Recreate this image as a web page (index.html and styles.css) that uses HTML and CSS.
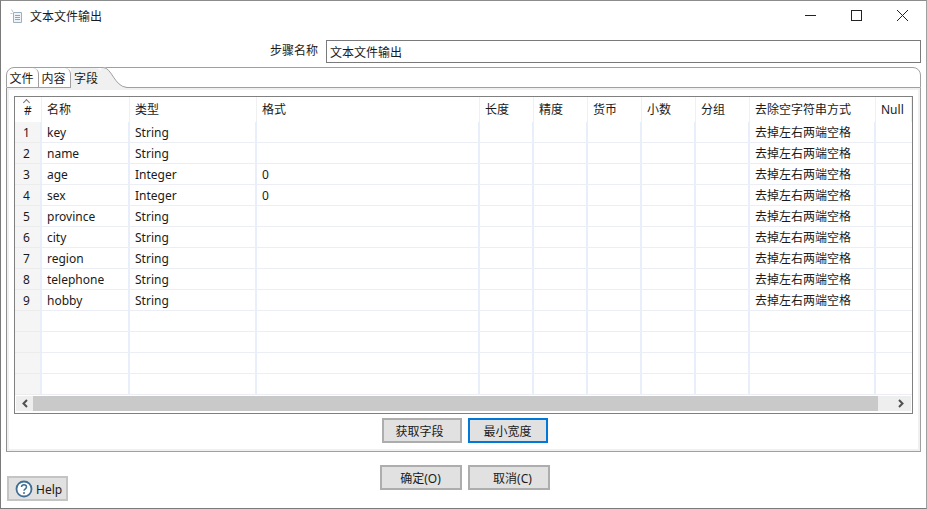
FILE: index.html
```html
<!DOCTYPE html>
<html>
<head>
  <title>文本文件输出</title>
  <link rel="stylesheet" href="styles.css">
</head>
<body>
  <div class="window">
    <div class="titlebar">
      <svg class="app-icon" width="14" height="15" viewBox="0 0 14 15">
        <path d="M3.500 3.500h8v10h-8z" fill="#eef3f7" stroke="#9db0bf"/>
        <path d="M5 6.500h5M5 8.500h5M5 10.500h5" stroke="#8fa5b5"/>
        <path d="M1.500 .5l1.500 2.500M.5 4.500h2" stroke="#b4c4d0"/>
      </svg>
      <span class="title">文本文件输出</span>
      <div class="controls">
        <svg width="46" height="32" viewBox="0 0 46 32"><path d="M18 15.500h11" stroke="#222"/></svg>
        <svg width="46" height="32" viewBox="0 0 46 32"><rect x="18.500" y="10.500" width="10" height="10" fill="none" stroke="#222"/></svg>
        <svg width="46" height="32" viewBox="0 0 46 32"><path d="M18 10l11 11M29 10l-11 11" stroke="#222" fill="none"/></svg>
      </div>
    </div>

    <div class="step-row">
      <label class="step-label">步骤名称</label>
      <input class="step-input" type="text" value="文本文件输出">
    </div>

    <div class="folder">
      <div class="tabs">
        <span class="tab">文件</span>
        <span class="tab">内容</span>
        <span class="tab tab-active">字段
          <svg class="tab-curve" width="30" height="22" viewBox="0 0 30 22">
            <path d="M0 0h2c9 0 11 19 24 20.500h4v1.500h-30z" fill="#f0f0f0"/>
            <path d="M0 .5h2c9 0 11 19 24 20h4" fill="none" stroke="#a0a0a0"/>
          </svg>
        </span>
      </div>
      <div class="panel">
        <div class="grid-frame">
          <table class="grid">
            <colgroup>
              <col class="c-num"><col class="c-name"><col class="c-type"><col class="c-format">
              <col class="c-small"><col class="c-small"><col class="c-small"><col class="c-small"><col class="c-small">
              <col class="c-trim"><col class="c-null">
            </colgroup>
            <thead>
              <tr>
                <th class="num"><span class="sort-caret"></span>#</th><th>名称</th><th>类型</th><th>格式</th><th>长度</th><th>精度</th><th>货币</th><th>小数</th><th>分组</th><th>去除空字符串方式</th><th>Null</th>
              </tr>
            </thead>
            <tbody>
              <tr><td class="num">1</td><td>key</td><td>String</td><td></td><td></td><td></td><td></td><td></td><td></td><td>去掉左右两端空格</td><td></td></tr>
              <tr><td class="num">2</td><td>name</td><td>String</td><td></td><td></td><td></td><td></td><td></td><td></td><td>去掉左右两端空格</td><td></td></tr>
              <tr><td class="num">3</td><td>age</td><td>Integer</td><td>0</td><td></td><td></td><td></td><td></td><td></td><td>去掉左右两端空格</td><td></td></tr>
              <tr><td class="num">4</td><td>sex</td><td>Integer</td><td>0</td><td></td><td></td><td></td><td></td><td></td><td>去掉左右两端空格</td><td></td></tr>
              <tr><td class="num">5</td><td>province</td><td>String</td><td></td><td></td><td></td><td></td><td></td><td></td><td>去掉左右两端空格</td><td></td></tr>
              <tr><td class="num">6</td><td>city</td><td>String</td><td></td><td></td><td></td><td></td><td></td><td></td><td>去掉左右两端空格</td><td></td></tr>
              <tr><td class="num">7</td><td>region</td><td>String</td><td></td><td></td><td></td><td></td><td></td><td></td><td>去掉左右两端空格</td><td></td></tr>
              <tr><td class="num">8</td><td>telephone</td><td>String</td><td></td><td></td><td></td><td></td><td></td><td></td><td>去掉左右两端空格</td><td></td></tr>
              <tr><td class="num">9</td><td>hobby</td><td>String</td><td></td><td></td><td></td><td></td><td></td><td></td><td>去掉左右两端空格</td><td></td></tr>
              <tr><td class="num"></td><td></td><td></td><td></td><td></td><td></td><td></td><td></td><td></td><td></td><td></td></tr>
              <tr><td class="num"></td><td></td><td></td><td></td><td></td><td></td><td></td><td></td><td></td><td></td><td></td></tr>
              <tr><td class="num"></td><td></td><td></td><td></td><td></td><td></td><td></td><td></td><td></td><td></td><td></td></tr>
              <tr><td class="num"></td><td></td><td></td><td></td><td></td><td></td><td></td><td></td><td></td><td></td><td></td></tr>
            </tbody>
          </table>
          <div class="scrollbar">
            <span class="arrow">
              <svg width="8" height="9" viewBox="0 0 8 9"><path d="M6 1L2.500 4.500 6 8" fill="none" stroke="#505050" stroke-width="2"/></svg>
            </span>
            <span class="thumb"></span>
            <span class="arrow arrow-right">
              <svg width="8" height="9" viewBox="0 0 8 9"><path d="M2 1l3.500 3.500L2 8" fill="none" stroke="#505050" stroke-width="2"/></svg>
            </span>
          </div>
        </div>
        <div class="panel-buttons">
          <button class="btn btn-fields">获取字段</button>
          <button class="btn btn-focus">最小宽度</button>
        </div>
      </div>
    </div>

    <div class="footer">
      <button class="btn btn-help">
        <svg width="18" height="18" viewBox="0 0 18 18">
          <circle cx="9" cy="9" r="7.500" fill="#fff" stroke="#3f6f96" stroke-width="1.800"/>
          <path d="M6.500 7c0-3 5-3 5 0 0 1.800-2.500 1.800-2.500 3.800" fill="none" stroke="#3f6f96" stroke-width="1.500"/>
          <circle cx="9" cy="13" r="1" fill="#3f6f96"/>
        </svg>
        <span class="help-text">Help</span>
      </button>
      <div class="footer-main">
        <button class="btn btn-wide">确定(O)</button>
        <button class="btn btn-wide btn-cancel">取消(C)</button>
      </div>
    </div>
  </div>
</body>
</html>
```

FILE: styles.css
```css
html, body {
  margin: 0;
  padding: 0;
  background: #fff;
}

body {
  font-family: "Noto Sans", "Noto Sans CJK SC", sans-serif;
  font-size: 12px;
  color: #1a1a1a;
}

.window {
  width: 927px;
  height: 509px;
  box-sizing: border-box;
  border: 1px solid #7a7a7a;
  border-top-color: #8c8c8c;
  border-right-color: #a0a0a0;
  background: #fff;
  display: flex;
  flex-direction: column;
  overflow: hidden;
}

.titlebar {
  height: 31px;
  display: flex;
  align-items: center;
  flex: none;
}

.app-icon {
  margin-left: 9px;
  margin-top: -1px;
}

.title {
  margin-left: 6px;
  margin-top: -2px;
}

.controls {
  margin-left: auto;
  display: flex;
  margin-top: -1px;
  margin-right: 1px;
}

.step-row {
  display: flex;
  align-items: center;
  height: 23px;
  margin-top: 8px;
  flex: none;
}

.step-label {
  width: 317px;
  text-align: right;
  margin-top: -3px;
}

.step-input {
  width: 595px;
  height: 23px;
  margin-left: 8px;
  box-sizing: border-box;
  border: 1px solid #7a7a7a;
  padding: 1px 3px;
  font: inherit;
  color: inherit;
  outline: none;
}

.folder {
  margin: 4px 0 0 5px;
  width: 915px;
  flex: none;
  position: relative;
}

.tabs {
  height: 21px;
  box-sizing: border-box;
  border: 1px solid #a0a0a0;
  border-radius: 8px 8px 0 0;
  display: flex;
}

.tab {
  width: 32px;
  height: 20px;
  box-sizing: border-box;
  padding-right: 2px;
  border-right: 1px solid #a0a0a0;
  border-top-right-radius: 6px;
  text-align: center;
  line-height: 22px;
}

.tab-active {
  position: relative;
  width: 31px;
  background: #f0f0f0;
  border-right: none;
  padding-right: 1px;
}

.tab-curve {
  position: absolute;
  left: 30px;
  top: -1px;
}

.panel {
  height: 364px;
  box-sizing: border-box;
  border: 1px solid #a0a0a0;
  border-top: none;
  border-left-color: #909090;
  background: #fff;
  box-shadow: inset 0 0 0 2px #f0f0f0;
  display: flex;
  flex-direction: column;
}

.grid-frame {
  background: #fff;
  margin: 8px 7px 0 7px;
  height: 318px;
  box-sizing: border-box;
  border: 1px solid #808080;
  display: flex;
  flex-direction: column;
  flex: none;
}

.grid {
  width: 897px;
  table-layout: fixed;
  border-collapse: separate;
  border-spacing: 0;
  flex: none;
}

.c-num { width: 27px; }
.c-name { width: 88px; }
.c-type { width: 127px; }
.c-format { width: 223px; }
.c-small { width: 54px; }
.c-trim { width: 126px; }
.c-null { width: 36px; }

.grid th {
  height: 25px;
  box-sizing: border-box;
  padding: 0 0 0 5px;
  font-weight: normal;
  text-align: left;
  line-height: 16px;
  border-right: 1px solid #f0f0f0;
  overflow: hidden;
  white-space: nowrap;
}

.grid th.num {
  position: relative;
  padding: 2px 0 0;
  text-align: center;
}

.sort-caret {
  position: absolute;
  left: 9px;
  top: 3px;
  width: 4px;
  height: 4px;
  border-left: 1px solid #777;
  border-top: 1px solid #777;
  transform: rotate(45deg);
}

.grid td {
  height: 21px;
  box-sizing: border-box;
  padding: 1px 0 0 5px;
  line-height: 18px;
  border-bottom: 1px solid #ebeff5;
  border-right: 2px solid #e9effa;
  white-space: nowrap;
  overflow: hidden;
}

.grid td.num {
  background: #f5f5f5;
  border-bottom-color: #ececec;
  padding-left: 8px;
}

.grid td:last-child {
  border-right: none;
}

.scrollbar {
  margin: 1px 1px 0 1px;
  height: 15px;
  display: flex;
  background: #eee;
  flex: none;
}

.arrow {
  width: 17px;
  display: flex;
  align-items: center;
  justify-content: center;
}

.thumb {
  width: 845px;
  background: #c9c9c9;
}

.arrow-right {
  margin-left: auto;
  width: 32px;
  padding-left: 12px;
  box-sizing: border-box;
}

.panel-buttons {
  display: flex;
  justify-content: center;
  gap: 6px;
  margin-top: 4px;
  margin-left: 2px;
}

.btn {
  width: 80px;
  height: 25px;
  box-sizing: border-box;
  padding: 0;
  border: 2px solid #adadad;
  background: #e1e1e1;
  font: inherit;
  color: #1a1a1a;
}

.btn-fields {
  padding-right: 4px;
}

.btn-focus {
  border-color: #0078d7;
}

.footer {
  position: relative;
  flex: none;
  margin-top: 13px;
  height: 36px;
}

.footer-main {
  display: flex;
  justify-content: center;
  gap: 6px;
  margin-left: 2px;
}

.btn-wide {
  width: 82px;
}

.btn-cancel {
  padding-left: 8px;
}

.btn-help {
  position: absolute;
  left: 6px;
  top: 11px;
  width: 61px;
  display: flex;
  align-items: center;
  gap: 3px;
  padding-left: 6px;
  border-color: #c4c4c4;
}

.help-text {
  margin-top: 2px;
}
```
